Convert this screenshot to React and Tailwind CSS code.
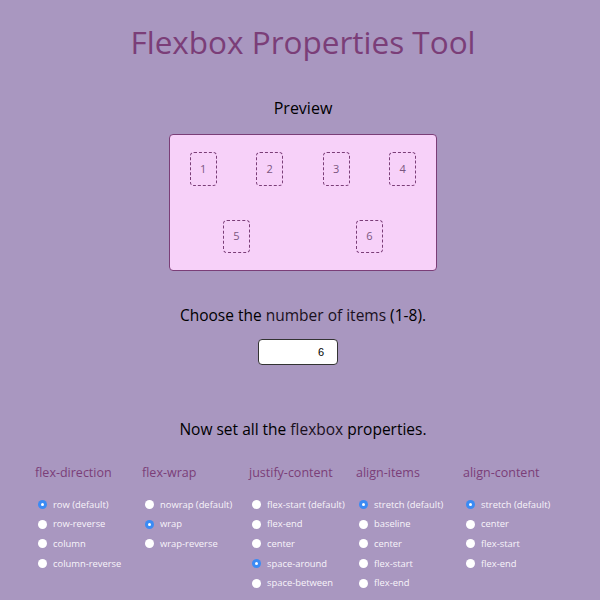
import React from "react";

const columns = [
  { title: "flex-direction", options: ["row (default)", "row-reverse", "column", "column-reverse"], checked: 0 },
  { title: "flex-wrap", options: ["nowrap (default)", "wrap", "wrap-reverse"], checked: 1 },
  { title: "justify-content", options: ["flex-start (default)", "flex-end", "center", "space-around", "space-between"], checked: 3 },
  { title: "align-items", options: ["stretch (default)", "baseline", "center", "flex-start", "flex-end"], checked: 0 },
  { title: "align-content", options: ["stretch (default)", "center", "flex-start", "flex-end"], checked: 0 },
];

function Radio({ checked }) {
  return checked ? (
    <span className="w-[9px] h-[9px] rounded-full bg-[#3b8bf4] flex items-center justify-center shrink-0">
      <span className="w-[3px] h-[3px] rounded-full bg-white" />
    </span>
  ) : (
    <span className="w-[9px] h-[9px] rounded-full bg-white shrink-0" />
  );
}

export default function App() {
  return (
    <div
      className="w-[600px] h-[600px] bg-[#a997c0] overflow-hidden flex flex-col items-center pl-[6px]"
      style={{ fontFamily: '"Open Sans", "Noto Sans", sans-serif' }}
    >
      <h1 className="mt-[20px] text-[31.5px] leading-[44px] text-[#7b3e78]">Flexbox Properties Tool</h1>
      <div className="mt-[33px] text-[16px] leading-[22px] text-black">Preview</div>
      <div className="mt-[15px] w-[268px] h-[137px] bg-[#f7d1f9] border border-[#7b3e78] rounded-[4px] flex flex-wrap justify-around content-stretch items-stretch">
        {[1, 2, 3, 4, 5, 6].map((n) => (
          <div
            key={n}
            className="w-[27px] mx-[15px] my-[17px] border border-dashed border-[#7b3e78] rounded-[4px] flex items-center justify-center text-[11px] text-[#7a5680]"
          >
            {n}
          </div>
        ))}
      </div>
      <div className="mt-[33px] text-[15.5px] leading-[22px] text-black">
        Choose the <span className="font-medium text-[#1a1020]">number of items</span> (1-8).
      </div>
      <div
        className="mt-[13px] mr-[10px] w-[80px] h-[26px] bg-white border border-[#333] rounded-[4px] flex items-center justify-end pr-[13px] text-[11px] text-black"
        style={{ fontFamily: '"Liberation Sans", Arial, sans-serif' }}
      >
        6
      </div>
      <div className="mt-[53px] text-[15.5px] leading-[22px] text-black">
        Now set all the <span className="font-medium text-[#1a1020]">flexbox</span> properties.
      </div>
      <div className="mt-[24px] w-full flex pl-[29px]">
        {columns.map((c) => (
          <div key={c.title} className="w-[107px] shrink-0 flex flex-col">
            <div className="text-[12.5px] leading-[18px] text-[#7b3e78]">{c.title}</div>
            <div className="mt-[13px] flex flex-col">
              {c.options.map((o, i) => (
                <div key={o} className="h-[19.6px] flex items-center gap-[6px] pl-[3px]">
                  <Radio checked={i === c.checked} />
                  <span className="text-[9.4px] text-[#f8f4fa] whitespace-nowrap">{o}</span>
                </div>
              ))}
            </div>
          </div>
        ))}
      </div>
    </div>
  );
}
